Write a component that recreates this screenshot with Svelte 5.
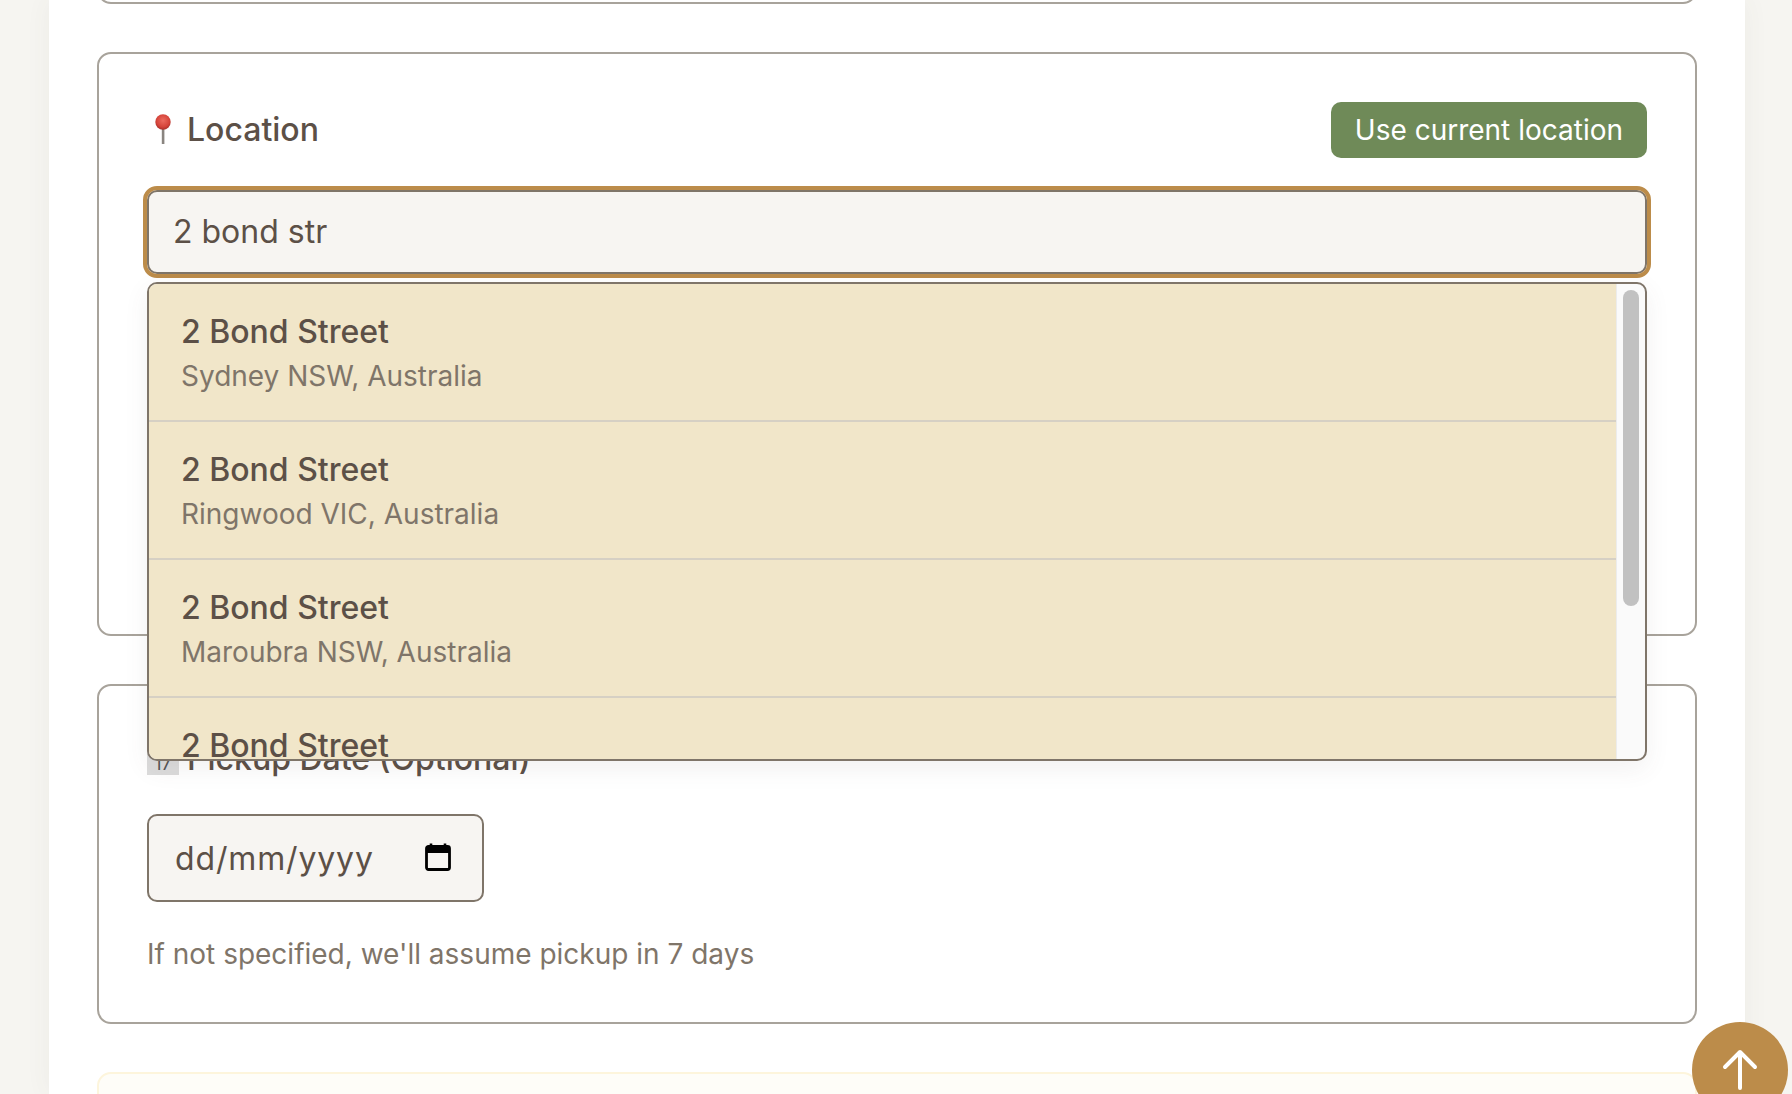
<script>
  const places = [
    { name: '2 Bond Street', area: 'Sydney NSW, Australia' },
    { name: '2 Bond Street', area: 'Ringwood VIC, Australia' },
    { name: '2 Bond Street', area: 'Maroubra NSW, Australia' },
    { name: '2 Bond Street', area: 'Melbourne VIC, Australia' }
  ];
</script>

<div class="page">
  <main class="sheet">
    <section class="card card-prev"></section>

    <section class="card card-location">
      <div class="head">
        <h2 class="title">
          <svg class="pin" width="32" height="32" viewBox="0 0 32 32" aria-hidden="true">
            <defs>
              <radialGradient id="ball" cx="50%" cy="40%" r="60%">
                <stop offset="0" stop-color="#ec6a5e" />
                <stop offset="0.7" stop-color="#d5443a" />
                <stop offset="1" stop-color="#a92f2a" />
              </radialGradient>
            </defs>
            <rect x="14.8" y="13" width="2.6" height="17" fill="#8a8580" />
            <circle cx="16" cy="8" r="7.7" fill="url(#ball)" />
          </svg>
          Location
        </h2>
        <button class="use-btn" type="button">Use current location</button>
      </div>

      <div class="search">
        <input class="search-input" type="text" value="2 bond str" />
        <div class="dropdown">
          <ul class="list">
            {#each places as p}
              <li class="item">
                <div class="item-name">{p.name}</div>
                <div class="item-area">{p.area}</div>
              </li>
            {/each}
          </ul>
          <div class="track"><div class="thumb"></div></div>
        </div>
      </div>
    </section>

    <section class="card card-date">
      <h2 class="title">
        <span class="emoji"><span class="emoji-num">17</span></span>
        Pickup Date (Optional)
      </h2>
      <div class="date-input">
        <span class="date-text">dd/mm/yyyy</span>
        <svg width="28" height="30" viewBox="0 0 28 30" aria-hidden="true">
          <path d="M7 1.5v3M21 1.5v3" stroke="#000" stroke-width="2.6" fill="none" />
          <rect x="2.500" y="4.500" width="23" height="23" rx="2" fill="none" stroke="#000" stroke-width="2.8" />
          <rect x="2.500" y="4.500" width="23" height="6.500" fill="#000" />
        </svg>
      </div>
      <p class="hint">If not specified, we'll assume pickup in 7 days</p>
    </section>

    <section class="card card-note"></section>
  </main>

  <button class="to-top" type="button" aria-label="Back to top">
    <svg width="96" height="96" viewBox="0 0 96 96" aria-hidden="true">
      <path d="M48 31v35M33 45l15-15 15 15" fill="none" stroke="#fff" stroke-width="4" stroke-linecap="round" stroke-linejoin="round" />
    </svg>
  </button>
</div>

<style>
  :global(body) {
    margin: 0;
    background: #f6f5f1;
    font-family: Inter, "Liberation Sans", sans-serif;
    color: #5c5047;
  }
  .page {
    height: 1094px;
    overflow: hidden;
    position: relative;
  }
  .sheet {
    width: 1696px;
    height: 1094px;
    margin-left: 49px;
    padding: 0 48px;
    box-sizing: border-box;
    background: #fff;
    box-shadow: 0 0 24px rgba(92, 80, 71, 0.06);
    overflow: hidden;
  }
  .card {
    box-sizing: border-box;
    border: 2px solid #a8a39b;
    border-radius: 14px;
    background: #fff;
  }
  .card-prev {
    height: 40px;
    margin-top: -36px;
  }
  .card-location {
    margin-top: 48px;
    height: 584px;
    padding: 48px;
  }
  .card-date {
    margin-top: 48px;
    height: 340px;
    padding: 49px 48px 48px;
  }
  .card-note {
    margin-top: 48px;
    height: 200px;
    border-color: #fdf5dc;
    background: #fefdf8;
  }
  .head {
    display: flex;
    align-items: center;
    justify-content: space-between;
    height: 56px;
  }
  .title {
    margin: 0;
    display: flex;
    align-items: center;
    gap: 8px;
    font-size: 32px;
    line-height: 48px;
    font-weight: 500;
    color: #5c5047;
  }
  .pin {
    flex: none;
  }
  .use-btn {
    height: 56px;
    padding: 0 24px;
    border: 0;
    border-radius: 10px;
    background: #6f8a58;
    color: #fff;
    font: 400 28px Inter, sans-serif;
  }
  .search {
    position: relative;
    margin-top: 32px;
  }
  .search-input {
    display: block;
    width: 100%;
    height: 84px;
    box-sizing: border-box;
    padding: 0 24px 2px;
    border: 2px solid #7f7569;
    border-radius: 10px;
    outline: 4px solid #bc8c4a;
    background: #f7f5f2;
    color: #5c5047;
    font: 400 32px Inter, sans-serif;
  }
  .dropdown {
    position: absolute;
    z-index: 5;
    top: 92px;
    left: 0;
    right: 0;
    height: 479px;
    box-sizing: border-box;
    display: flex;
    overflow: hidden;
    border: 2px solid #7f7569;
    border-radius: 10px;
    background: #fafafa;
    box-shadow: 0 8px 24px rgba(92, 80, 71, 0.08);
  }
  .list {
    flex: 1;
    margin: 0;
    padding: 0;
    list-style: none;
    background: #f1e6c9;
  }
  .item {
    box-sizing: border-box;
    height: 138px;
    padding: 28px 32px;
    border-bottom: 2px solid #d6d0c4;
  }
  .item-name {
    font-size: 32px;
    line-height: 40px;
    font-weight: 500;
    color: #5c5047;
  }
  .item-area {
    margin-top: 4px;
    font-size: 28px;
    line-height: 40px;
    color: #7f7569;
  }
  .track {
    flex: none;
    width: 29px;
    box-sizing: border-box;
    padding: 6px 6px 0 6px;
    border-left: 1px solid #ececec;
  }
  .thumb {
    width: 16px;
    height: 316px;
    border-radius: 8px;
    background: #c1c1c1;
  }
  .emoji {
    width: 32px;
    height: 32px;
    display: flex;
    align-items: flex-end;
    justify-content: center;
    padding-bottom: 2px;
    box-sizing: border-box;
    background: #dcdcdc;
  }
  .emoji-num {
    font-size: 18px;
    line-height: 18px;
    font-weight: 400;
    color: #555;
  }
  .date-input {
    margin-top: 31px;
    box-sizing: border-box;
    width: 337px;
    height: 88px;
    padding: 0 30px 0 26px;
    display: flex;
    align-items: center;
    justify-content: space-between;
    border: 2px solid #7f7569;
    border-radius: 10px;
    background: #f7f5f2;
    font-size: 32px;
    color: #5c5047;
  }
  .date-text {
    letter-spacing: 0.85px;
  }
  .date-input svg {
    margin-top: -2px;
  }
  .hint {
    margin: 32px 0 0;
    font-size: 28px;
    line-height: 40px;
    color: #7f7569;
  }
  .to-top {
    position: absolute;
    left: 1692px;
    top: 1022px;
    width: 96px;
    height: 96px;
    padding: 0;
    border: 0;
    border-radius: 50%;
    background: #bc8c4a;
  }
  .to-top svg {
    display: block;
  }
</style>
